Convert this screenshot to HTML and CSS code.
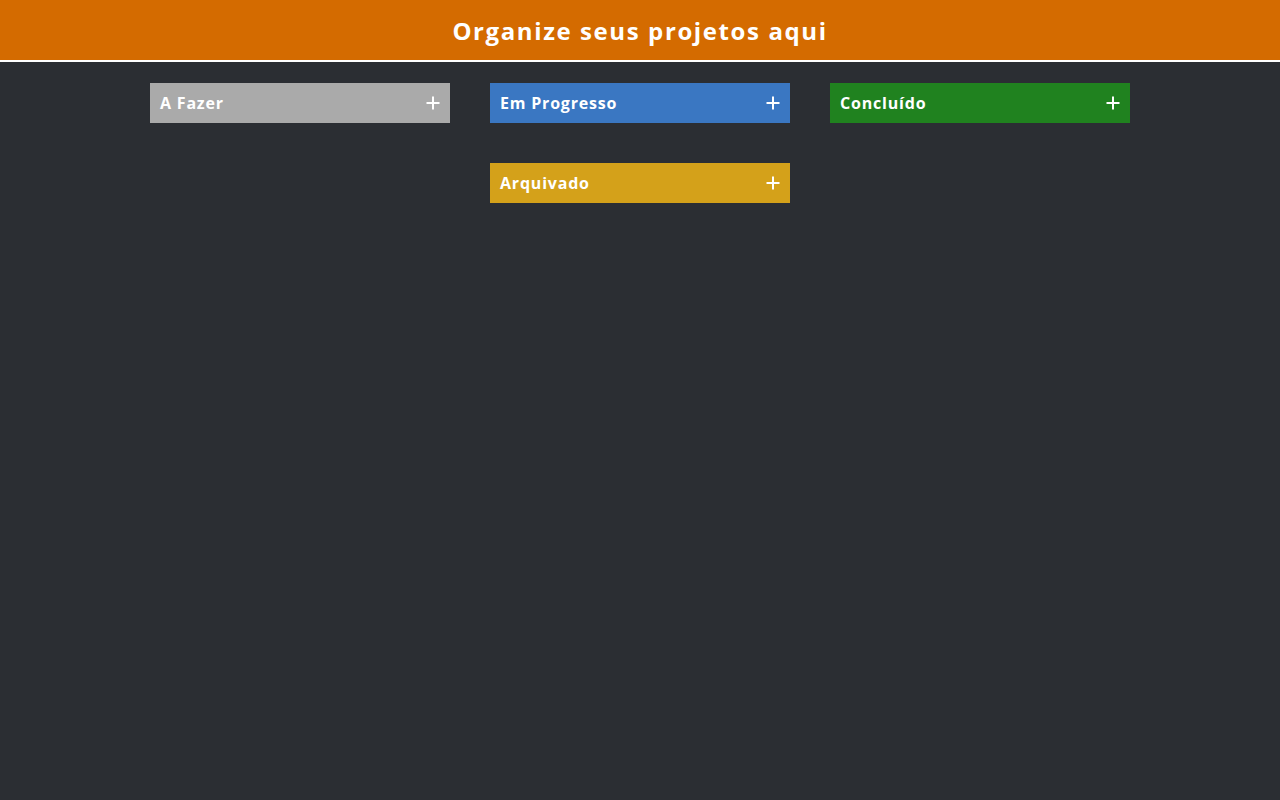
FILE: index.html
```html
<!DOCTYPE html>
<html lang="pt-BR">
<head>
<meta charset="utf-8">
<title>Kanban</title>
<link rel="stylesheet" href="styles.css">
</head>
<body>
<header class="topbar">
  <h1 class="title">Organize seus projetos aqui</h1>
</header>
<main class="board">
  <section class="column">
    <div class="column-head head-todo">
      <span class="column-name">A Fazer</span>
      <button class="add" aria-label="Adicionar"><svg viewBox="0 0 14 14" width="14" height="14"><path d="M7 0.5V13.5M0.5 7H13.5" stroke="#fff" stroke-width="2" fill="none"/></svg></button>
    </div>
  </section>
  <section class="column">
    <div class="column-head head-progress">
      <span class="column-name">Em Progresso</span>
      <button class="add" aria-label="Adicionar"><svg viewBox="0 0 14 14" width="14" height="14"><path d="M7 0.5V13.5M0.5 7H13.5" stroke="#fff" stroke-width="2" fill="none"/></svg></button>
    </div>
  </section>
  <section class="column">
    <div class="column-head head-done">
      <span class="column-name">Concluído</span>
      <button class="add" aria-label="Adicionar"><svg viewBox="0 0 14 14" width="14" height="14"><path d="M7 0.5V13.5M0.5 7H13.5" stroke="#fff" stroke-width="2" fill="none"/></svg></button>
    </div>
  </section>
  <section class="column">
    <div class="column-head head-archived">
      <span class="column-name">Arquivado</span>
      <button class="add" aria-label="Adicionar"><svg viewBox="0 0 14 14" width="14" height="14"><path d="M7 0.5V13.5M0.5 7H13.5" stroke="#fff" stroke-width="2" fill="none"/></svg></button>
    </div>
  </section>
</main>
</body>
</html>
```

FILE: styles.css
```css
* { box-sizing: border-box; }
html, body {
  margin: 0;
  padding: 0;
  background: #2b2e33;
  min-height: 100%;
  font-family: "Open Sans", "DejaVu Sans", sans-serif;
  color: #fff;
}
.topbar {
  height: 62px;
  background: #d46b00;
  border-bottom: 2px solid #fff;
  display: flex;
  align-items: center;
  justify-content: center;
}
.title {
  margin: 0;
  font-size: 24px;
  font-weight: 700;
  letter-spacing: 1.6px;
  line-height: 1;
  padding-top: 2px;
}
.board {
  width: 1000px;
  margin: 21px auto 0;
  display: flex;
  flex-wrap: wrap;
  justify-content: center;
  gap: 40px;
}
.column {
  width: 300px;
}
.column-head {
  height: 40px;
  display: flex;
  align-items: center;
  justify-content: space-between;
  padding: 0 10px;
}
.column-name {
  font-size: 16px;
  font-weight: 700;
  letter-spacing: 0.8px;
}
.add {
  background: none;
  border: 0;
  padding: 0;
  width: 14px;
  height: 14px;
  display: flex;
  cursor: pointer;
}
.head-todo { background: #aaaaaa; }
.head-progress { background: #3a77c2; }
.head-done { background: #20821f; }
.head-archived { background: #d4a11a; }
```
